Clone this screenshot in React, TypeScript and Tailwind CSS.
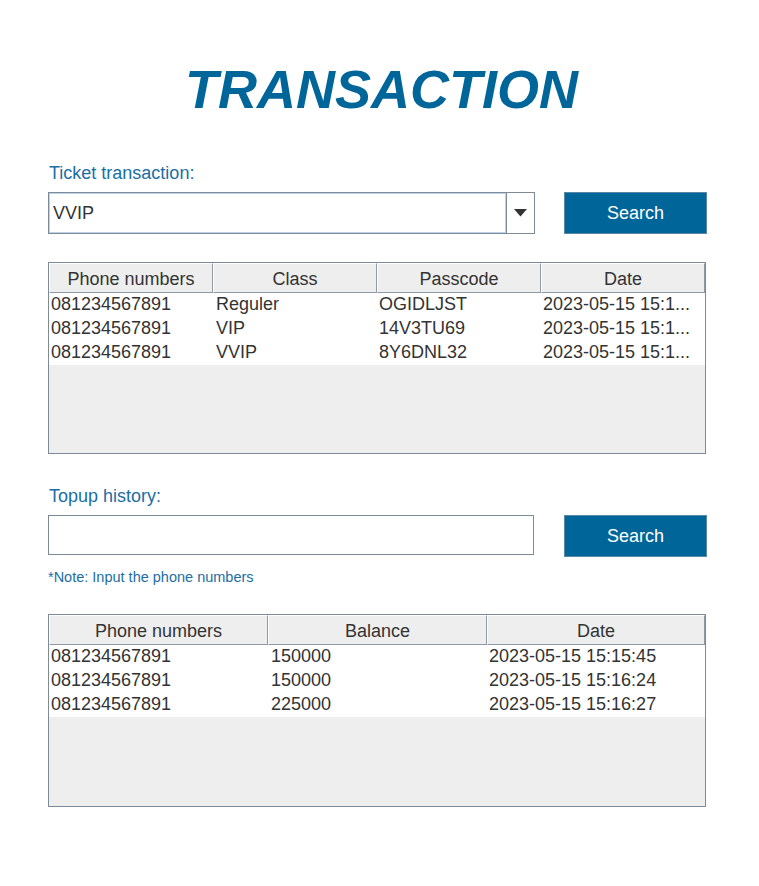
const ticketRows = [
  { phone: '081234567891', cls: 'Reguler', code: 'OGIDLJST', date: '2023-05-15 15:1...' },
  { phone: '081234567891', cls: 'VIP', code: '14V3TU69', date: '2023-05-15 15:1...' },
  { phone: '081234567891', cls: 'VVIP', code: '8Y6DNL32', date: '2023-05-15 15:1...' }
];

const topupRows = [
  { phone: '081234567891', balance: '150000', date: '2023-05-15 15:15:45' },
  { phone: '081234567891', balance: '150000', date: '2023-05-15 15:16:24' },
  { phone: '081234567891', balance: '225000', date: '2023-05-15 15:16:27' }
];

function HeaderCell({ label, w }: { label: string; w: string }) {
  return (
    <div
      className={`${w} h-[30px] shrink-0 border-t border-l border-white border-r border-b border-r-[#8e99a4] border-b-[#8e99a4] bg-[#eeeeee] pt-[2px] text-center leading-[26px] text-[#333333]`}
    >
      {label}
    </div>
  );
}

function SearchButton() {
  return (
    <button className="h-[42px] w-[143px] border border-[#5d86a4] bg-[#006699] pt-px text-[18px] text-white">
      Search
    </button>
  );
}

export default function App() {
  return (
    <div
      className="min-h-[886px] w-[759px] bg-white pl-[48px]"
      style={{ fontFamily: '"Liberation Sans", Arial, sans-serif' }}
    >
      <h1 className="w-[667px] pt-[62px] text-center text-[54px] font-bold italic leading-[54px] text-[#006699]">
        TRANSACTION
      </h1>

      <div className="mt-[47px] h-[20px] pl-px text-[18px] leading-[20px] text-[#1b6ea3]">Ticket transaction:</div>
      <div className="mt-[9px] flex items-start gap-[29px]">
        <div className="flex h-[42px] w-[487px] border border-[#7d8a97] bg-white">
          <div className="flex flex-1 items-center border border-[#bcd2e6] pl-[3px] text-[18px] text-[#333333]">
            VVIP
          </div>
          <div className="flex w-[28px] items-center justify-center border-l border-[#7d8a97]">
            <svg width="13" height="8" viewBox="0 0 13 8">
              <path d="M0 0 H13 L6.5 7.5 Z" fill="#333333" />
            </svg>
          </div>
        </div>
        <SearchButton />
      </div>

      <div className="mt-[28px] flex h-[192px] w-[658px] flex-col border border-[#7d8a97] bg-[#eeeeee] text-[18px]">
        <div className="flex bg-white">
          <HeaderCell label="Phone numbers" w="w-[164px]" />
          <HeaderCell label="Class" w="w-[164px]" />
          <HeaderCell label="Passcode" w="w-[164px]" />
          <HeaderCell label="Date" w="w-[164px]" />
        </div>
        <div className="bg-white">
          {ticketRows.map((r) => (
            <div key={r.code} className="flex h-[24px] leading-[22px] text-[#333333]">
              <div className="w-[164px] pl-[2px]">{r.phone}</div>
              <div className="w-[164px] pl-[3px]">{r.cls}</div>
              <div className="w-[164px] pl-[2px]">{r.code}</div>
              <div className="w-[164px] pl-[2px]">{r.date}</div>
            </div>
          ))}
        </div>
      </div>

      <div className="mt-[32px] h-[20px] pl-px text-[18px] leading-[20px] text-[#1b6ea3]">Topup history:</div>
      <div className="mt-[9px] flex items-start gap-[30px]">
        <div className="h-[40px] w-[486px] border border-[#7d8a97] bg-white" />
        <SearchButton />
      </div>
      <div className="mt-[12px] h-[16px] text-[14.5px] leading-[16px] text-[#1b6ea3]">*Note: Input the phone numbers</div>

      <div className="mt-[29px] flex h-[193px] w-[658px] flex-col border border-[#7d8a97] bg-[#eeeeee] text-[18px]">
        <div className="flex bg-white">
          <HeaderCell label="Phone numbers" w="w-[219px]" />
          <HeaderCell label="Balance" w="w-[219px]" />
          <HeaderCell label="Date" w="w-[218px]" />
        </div>
        <div className="bg-white">
          {topupRows.map((r) => (
            <div key={r.date} className="flex h-[24px] leading-[22px] text-[#333333]">
              <div className="w-[219px] pl-[2px]">{r.phone}</div>
              <div className="w-[219px] pl-[3px]">{r.balance}</div>
              <div className="w-[218px] pl-[2px]">{r.date}</div>
            </div>
          ))}
        </div>
      </div>
    </div>
  );
}
